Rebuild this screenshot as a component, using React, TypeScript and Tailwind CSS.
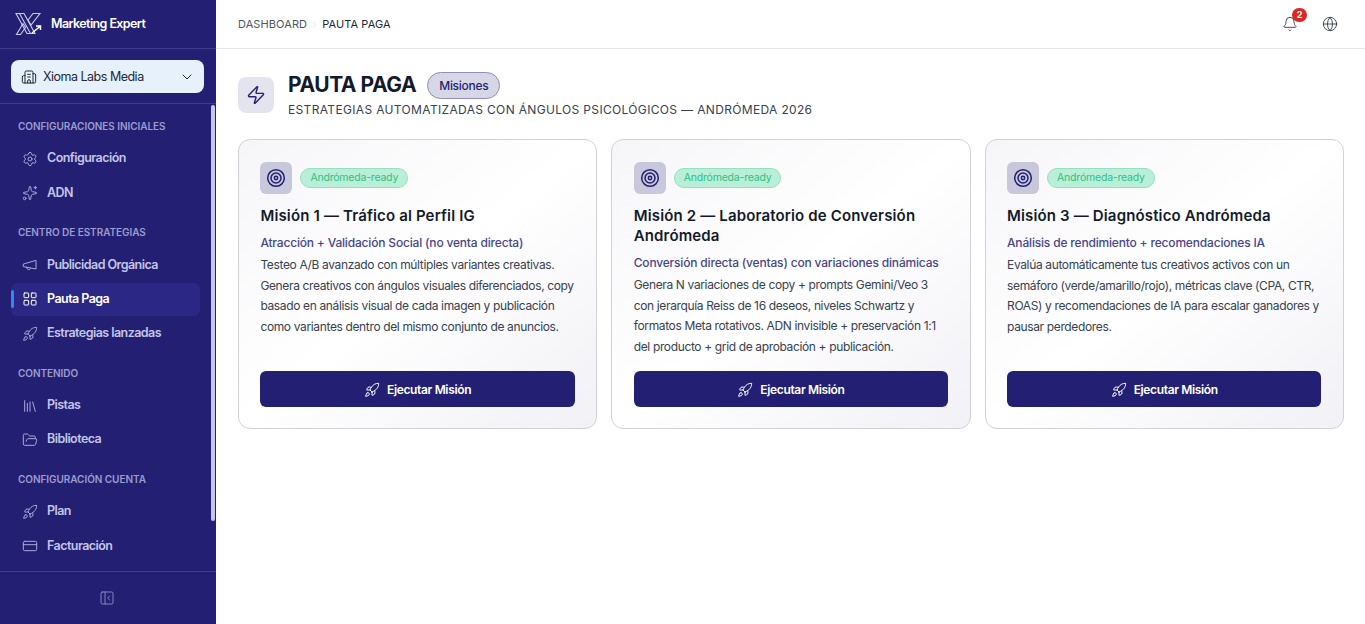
import { Bell, Building2, ChevronDown, CreditCard, FolderOpen, Globe, LayoutGrid, Library, PanelLeftClose, Rocket, Settings, Sparkles, Target, Zap, ChevronRight } from "lucide-react";
import type { ComponentType } from "react";

type IconProps = { className?: string; strokeWidth?: number };
type NavItem = { label: string; icon: ComponentType<IconProps>; active?: boolean };

const Horn = ({ className, strokeWidth }: IconProps) => (
  <svg viewBox="0 0 24 24" className={className} fill="none" stroke="currentColor" strokeWidth={strokeWidth} strokeLinecap="round" strokeLinejoin="round">
    <path d="M2.5 10.5 21 5v13L2.5 14.5z" />
    <path d="M7 15.5c0 2 1 3.5 3 3.5s2.5-1 2.5-2" />
  </svg>
);

const groups: { title: string; items: NavItem[] }[] = [
  { title: "CONFIGURACIONES INICIALES", items: [{ label: "Configuración", icon: Settings }, { label: "ADN", icon: Sparkles }] },
  {
    title: "CENTRO DE ESTRATEGIAS",
    items: [
      { label: "Publicidad Orgánica", icon: Horn },
      { label: "Pauta Paga", icon: LayoutGrid, active: true },
      { label: "Estrategias lanzadas", icon: Rocket },
    ],
  },
  { title: "CONTENIDO", items: [{ label: "Pistas", icon: Library }, { label: "Biblioteca", icon: FolderOpen }] },
  { title: "CONFIGURACIÓN CUENTA", items: [{ label: "Plan", icon: Rocket }, { label: "Facturación", icon: CreditCard }] },
];

const missions = [
  {
    title: "Misión 1 — Tráfico al Perfil IG",
    subtitle: "Atracción + Validación Social (no venta directa)",
    body: "Testeo A/B avanzado con múltiples variantes creativas.\nGenera creativos con ángulos visuales diferenciados, copy\nbasado en análisis visual de cada imagen y publicación\ncomo variantes dentro del mismo conjunto de anuncios.",
  },
  {
    title: "Misión 2 — Laboratorio de Conversión Andrómeda",
    subtitle: "Conversión directa (ventas) con variaciones dinámicas",
    body: "Genera N variaciones de copy + prompts Gemini/Veo 3\ncon jerarquía Reiss de 16 deseos, niveles Schwartz y\nformatos Meta rotativos. ADN invisible + preservación 1:1\ndel producto + grid de aprobación + publicación.",
  },
  {
    title: "Misión 3 — Diagnóstico Andrómeda",
    subtitle: "Análisis de rendimiento + recomendaciones IA",
    body: "Evalúa automáticamente tus creativos activos con un\nsemáforo (verde/amarillo/rojo), métricas clave (CPA, CTR,\nROAS) y recomendaciones de IA para escalar ganadores y\npausar perdedores.",
  },
];

const Logo = () => (
  <svg viewBox="0 0 28 24" className="h-6 w-7 text-[#c9cbe8]" fill="none" stroke="currentColor" strokeWidth="1.1">
    <path d="M1 1.5h8l11 20h-8z" />
    <path d="M4.5 1.5l11 20" />
    <path d="M25 1.5h-7l-5 6.5 3 5z" />
    <path d="M1.5 22.5h4l5-7-2.500-4z" />
    <path d="M17 21l8-6.500M21 14h4.500v4" stroke="#ffffff" strokeWidth="1.5" />
  </svg>
);

const Sidebar = () => (
  <aside className="flex h-[624px] w-[216px] shrink-0 flex-col bg-[#231f73]">
    <div className="flex h-[49px] items-center gap-2 border-b border-[#3f3b8c] pl-[15px]">
      <Logo />
      <span className="pt-px text-[12.5px] font-semibold tracking-[-0.6px] text-white">Marketing Expert</span>
    </div>
    <div className="border-b border-[#3f3b8c] px-[11px] pb-[10px] pt-[11px]">
      <div className="flex h-[33px] w-[193px] items-center rounded-lg bg-[#e6f1fb] pl-[10px] pr-[9px] text-[#1f2937]">
        <Building2 className="h-4 w-4" strokeWidth={1.5} />
        <span className="ml-[6px] flex-1 pt-px text-[12.5px] tracking-[-0.5px]">Xioma Labs Media</span>
        <ChevronDown className="h-4 w-4" strokeWidth={1.5} />
      </div>
    </div>
    <div className="relative flex-1 overflow-hidden pl-[11px] pr-[16px] pt-[15px]">
      <div className="absolute right-px top-px h-[416px] w-[4px] rounded-full bg-[#c5c6f0]" />
      {groups.map((g) => (
        <div key={g.title} className="mb-[15.7px]">
          <div className="pl-[7px] text-[10px] font-semibold leading-[15px] tracking-[-0.05px] text-[#9c9ccd]">{g.title}</div>
          <div className="mt-[8px] flex flex-col gap-px">
            {g.items.map((item) => (
              <div
                key={item.label}
                className={`relative flex h-[33.3px] items-center rounded-md pl-[11px] text-[12.5px] font-semibold tracking-[-0.55px] ${
                  item.active ? "bg-[#2b2785] text-white" : "text-[#c5c5e8]"
                }`}
              >
                {item.active && <span className="absolute left-0 top-[7px] h-[18px] w-[3px] rounded-full bg-[#3b82f6]" />}
                <item.icon className={`h-4 w-4 shrink-0 ${item.active ? "text-white" : "text-[#a9a9d8]"}`} strokeWidth={1.5} />
                <span className="ml-[9px]">{item.label}</span>
              </div>
            ))}
          </div>
        </div>
      ))}
    </div>
    <div className="flex h-[53px] items-center justify-center border-t border-[#3f3b8c] pr-[2px] text-[#8f8fc4]">
      <PanelLeftClose className="h-4 w-4" strokeWidth={1.4} />
    </div>
  </aside>
);

const MissionCard = ({ title, subtitle, body }: { title: string; subtitle: string; body: string }) => (
  <div className="flex h-[290px] flex-col rounded-xl border border-[#d1d2d8] bg-gradient-to-br from-[#f6f6f9] via-[#ffffff] to-[#f1f1f6] pb-[21px] pl-[21.4px] pr-[21.6px] pt-[22px]">
    <div className="flex items-center gap-2">
      <div className="flex h-8 w-8 items-center justify-center rounded-md bg-[#c8c7dc] text-[#231f73]">
        <Target className="h-5 w-5" strokeWidth={1.8} />
      </div>
      <span className="rounded-full border border-[#95e0c0] bg-[#b9efd8] px-[9px] text-[10.5px] leading-[18px] tracking-[-0.2px] text-[#2fbf86]">Andrómeda-ready</span>
    </div>
    <h3 className="mt-[12px] text-[15px] font-semibold leading-[20px] tracking-[0.15px] text-[#131a2b]">{title}</h3>
    <p className="mt-[7px] text-[12px] font-medium leading-[20px] tracking-[-0.18px] text-[#48458c]">{subtitle}</p>
    <p className="mt-[2px] whitespace-pre-line text-[12px] leading-[20.5px] tracking-[-0.36px] text-[#374151]">{body}</p>
    <button className="mt-auto flex h-9 items-center justify-center gap-[7px] rounded-md bg-[#231f73] pt-px text-[12px] font-semibold tracking-[-0.35px] text-white">
      <Rocket className="h-4 w-4" strokeWidth={1.5} />
      Ejecutar Misión
    </button>
  </div>
);

export default function App() {
  return (
    <div className="flex h-[624px] w-[1365px] overflow-hidden bg-white font-['Inter',sans-serif]">
      <Sidebar />
      <main className="flex-1">
        <header className="flex h-[49px] items-center justify-between border-b border-[#e5e7eb] pl-[22px] pr-[27px]">
          <div className="flex items-center text-[11px] tracking-[0.1px]">
            <span className="text-[#4b5563]">DASHBOARD</span>
            <ChevronRight className="mx-[2px] h-[11px] w-[11px] text-[#e5e7eb]" />
            <span className="text-[#1f2937]">PAUTA PAGA</span>
          </div>
          <div className="flex items-center gap-6">
            <div className="relative">
              <Bell className="h-4 w-4 text-[#374151]" strokeWidth={1.4} />
              <span className="absolute -right-[9px] -top-[8px] flex h-[14px] w-[15px] items-center justify-center rounded-full bg-[#dc2626] text-[9px] font-bold text-white">2</span>
            </div>
            <Globe className="h-4 w-4 text-[#374151]" strokeWidth={1.4} />
          </div>
        </header>
        <div className="pl-[22px] pr-[21px] pt-[22px]">
          <div className="flex items-center gap-[14px]">
            <div className="flex h-9 w-9 items-center justify-center rounded-lg bg-[#e4e4ee] text-[#231f73]">
              <Zap className="h-5 w-5" strokeWidth={1.7} />
            </div>
            <div>
              <div className="flex items-center gap-[11px]">
                <h1 className="text-[21px] font-bold leading-[28px] tracking-[-0.45px] text-[#131a2b]">PAUTA PAGA</h1>
                <span className="rounded-full border border-[#8f8fb0] bg-[#d6d6e6] px-[11px] text-[12px] font-medium leading-[25px] tracking-[-0.3px] text-[#231f73]">Misiones</span>
              </div>
              <p className="mt-[3px] text-[12px] leading-[16px] tracking-[0.34px] text-[#374151]">ESTRATEGIAS AUTOMATIZADAS CON ÁNGULOS PSICOLÓGICOS — ANDRÓMEDA 2026</p>
            </div>
          </div>
          <div className="mt-[21px] grid grid-cols-3 gap-[14px]">
            {missions.map((m) => (
              <MissionCard key={m.title} {...m} />
            ))}
          </div>
        </div>
      </main>
    </div>
  );
}
